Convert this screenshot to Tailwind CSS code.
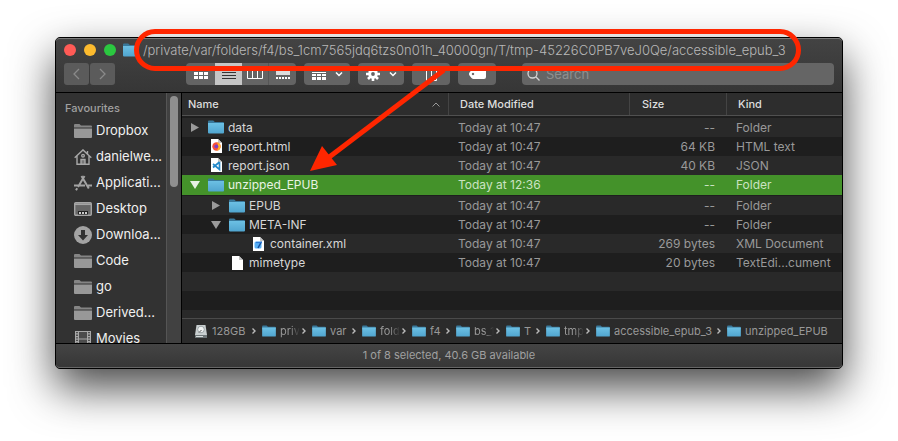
<!DOCTYPE html>
<html lang="en">
<head>
<meta charset="utf-8">
<meta name="viewport" content="width=device-width, initial-scale=1">
<title>accessible_epub_3</title>
<script src="https://cdn.jsdelivr.net/npm/@tailwindcss/browser@4"></script>
</head>
<body class="bg-white font-['Inter','Liberation_Sans',sans-serif]">
<svg class="absolute w-0 h-0" aria-hidden="true">
  <defs>
    <linearGradient id="blue" x1="0" y1="0" x2="0" y2="1"><stop offset="0" stop-color="#6cc0e4"/><stop offset="1" stop-color="#50a5cf"/></linearGradient>
  </defs>
  <symbol id="folder" viewBox="0 0 16 14"><path fill="#39789a" d="M0 1.500Q0 .5 1 .5h4.200l1.600 1.500H15q1 0 1 1V5H0z"/><path fill="url(#blue)" d="M0 3h16v9.500q0 1-1 1H1q-1 0-1-1z"/></symbol>
  <symbol id="sfolder" viewBox="0 0 18 14"><path fill="#858585" d="M0 1Q0 0 1 0h4.500l1.500 1.500H17q1 0 1 1V3.500H0z"/><path fill="#989898" d="M0 4.500h18V13q0 1-1 1H1q-1 0-1-1z"/></symbol>
  <symbol id="page" viewBox="0 0 11 14"><path fill="#fff" d="M0 0h7l4 4v10H0z"/><path fill="#c4c4c4" d="M7 0l4 4H7z"/></symbol>
</svg>
<div class="min-h-screen overflow-hidden px-[55px] pt-[37px]">
  <div class="relative rounded-[5px] border border-black bg-[#323232] shadow-[0_19px_44px_rgba(0,0,0,0.72)]">

    <header class="rounded-t-[4px] border-t border-b border-t-[#7a7a7a] border-b-black bg-linear-to-b from-[#434343] to-[#363636] h-[55px] px-2">
      <div class="flex items-center h-[22px]">
        <div class="flex gap-2 shrink-0">
          <button aria-label="Close" class="size-3 rounded-full bg-[#ff5b56]"></button>
          <button aria-label="Minimise" class="size-3 rounded-full bg-[#fdbb2e]"></button>
          <button aria-label="Zoom" class="size-3 rounded-full bg-[#2bc840]"></button>
        </div>
        <svg class="ml-[7px] w-4 h-[14px] shrink-0"><use href="#folder"/></svg>
        <h1 class="ml-1 text-[13px] leading-4 font-light text-[#b8b8b8] whitespace-nowrap">/private/var/folders/f4/bs_1cm7565jdq6tzs0n01h_40000gn/T/tmp-45226C0PB7veJ0Qe/accessible_epub_3</h1>
      </div>
      <div class="flex items-center mt-[2px] h-[22px]">
        <div class="flex gap-px shrink-0 mr-[71px]">
          <button aria-label="Back" class="flex items-center justify-center w-[25px] h-[22px] rounded-[3px] bg-[#5b5b5b]"><svg class="w-[7px] h-3" viewBox="0 0 7 12" fill="none" stroke="#8a8a8a" stroke-width="1.300"><path d="M6 1L1 6l5 5"/></svg></button>
          <button aria-label="Forward" class="flex items-center justify-center w-[25px] h-[22px] rounded-[3px] bg-[#5b5b5b]"><svg class="w-[7px] h-3" viewBox="0 0 7 12" fill="none" stroke="#8a8a8a" stroke-width="1.300"><path d="M1 1l5 5-5 5"/></svg></button>
        </div>
        <div class="flex shrink-0 mr-2 rounded-[4px] overflow-hidden bg-[#646464]">
          <button aria-label="Icon view" class="flex items-center justify-center w-[29px] h-[22px]"><svg class="w-[14px] h-3" viewBox="0 0 14 12" fill="#fff"><path d="M0 0h4v3H0zM5 0h4v3H5zM10 0h4v3h-4zM0 4h4v3H0zM5 4h4v3H5zM10 4h4v3h-4zM0 8h4v3H0zM5 8h4v3H5zM10 8h4v3h-4z"/></svg></button>
          <button aria-label="List view" class="flex items-center justify-center w-[27px] h-[22px] bg-[#c6c6c6]"><svg class="w-[14px] h-3" viewBox="0 0 14 12" stroke="#333"><path d="M0 1.500h14M0 4.500h14M0 7.500h14M0 10.500h14"/></svg></button>
          <button aria-label="Column view" class="flex items-center justify-center w-[26px] h-[22px]"><svg class="w-4 h-3" viewBox="0 0 16 12" fill="none" stroke="#fff"><path d="M.5 .5h15v10H.5zM5.500 0v11M10.500 0v11"/></svg></button>
          <button aria-label="Gallery view" class="flex items-center justify-center w-7 h-[22px] border-l border-[#555]"><svg class="w-[14px] h-3" viewBox="0 0 14 12" fill="#fff"><path fill="#ddd" d="M0 0h14v7H0z"/><path d="M0 9h2v2H0zM3 9h2v2H3zM6 9h2v2H6zM9 9h2v2H9zM12 9h2v2h-2z"/></svg></button>
        </div>
        <div class="flex gap-2 shrink-0 mr-[26px]">
          <button aria-label="Group" class="flex items-center justify-center gap-[9px] w-[46px] h-[22px] rounded-[4px] bg-[#646464]"><svg class="w-[14px] h-3" viewBox="0 0 14 12" fill="#fff"><path d="M0 0h4v3H0zM5 0h4v3H5zM10 0h4v3h-4zM0 4h14v1H0zM0 6h4v2H0zM5 6h4v2H5zM10 6h4v2h-4zM0 9h4v3H0zM5 9h4v3H5zM10 9h4v3h-4z"/></svg><svg class="w-2 h-[5px]" viewBox="0 0 8 5" fill="none" stroke="#fff" stroke-width="1.500"><path d="M1 .5l3 3 3-3"/></svg></button>
          <button aria-label="Action" class="flex items-center justify-center gap-[9px] w-[46px] h-[22px] rounded-[4px] bg-[#646464]"><svg class="size-[14px]" viewBox="0 0 14 14"><g stroke="#fff" stroke-width="2.600"><path d="M7 0v14M0 7h14M2 2l10 10M12 2L2 12"/></g><circle cx="7" cy="7" r="4.800" fill="#fff"/><circle cx="7" cy="7" r="1.900" fill="#646464"/></svg><svg class="w-2 h-[5px]" viewBox="0 0 8 5" fill="none" stroke="#fff" stroke-width="1.500"><path d="M1 .5l3 3 3-3"/></svg></button>
          <button aria-label="Share" class="flex items-center justify-center w-[38px] h-[22px] rounded-[4px] bg-[#646464]"><svg class="w-[11px] h-4" viewBox="0 0 11 16" fill="none" stroke="#fff"><path d="M3.500 4.500h-3v10h10v-10h-3M5.500 10V1M3 3.500L5.500 1 8 3.500"/></svg></button>
          <button aria-label="Tags" class="flex items-center justify-center w-[38px] h-[22px] rounded-[4px] bg-[#646464]"><svg class="w-[17px] h-[10px]" viewBox="0 0 17 10"><path fill="#fff" fill-rule="evenodd" d="M4.500 0H15q2 0 2 2v6q0 2-2 2H4.500Q3.500 10 2.500 9L.5 6.500Q-.5 5 .5 3.500L2.500 1Q3.500 0 4.500 0zM4 3.800a1.200 1.200 0 1 0 .01 0z"/></svg></button>
        </div>
        <label class="flex flex-1 items-center gap-[6px] h-[22px] pl-[5px] rounded-[4px] bg-[#656565]">
          <svg class="size-[13px] shrink-0" viewBox="0 0 13 13" fill="none" stroke="#d4d4d4" stroke-width="1.300"><circle cx="5.500" cy="5.500" r="4.500"/><path d="M8.800 8.800L12.500 12.500"/></svg>
          <input type="search" aria-label="Search" placeholder="Search" class="flex-1 min-w-0 bg-transparent outline-none text-[13px] leading-4 text-white placeholder:text-[#8f8f8f]">
        </label>
        </div>
    </header>

    <div class="flex h-[250px] overflow-hidden">
      <nav aria-label="Favourites" class="flex w-[126px] shrink-0 border-r border-black">
        <div class="flex-1 min-w-0 pl-[9px]">
          <h2 class="pt-2 pb-[3px] text-[11px] leading-[14px] font-medium text-[#a0a0a0]">Favourites</h2>
          <ul class="pl-[9px] text-[13px] text-[#f0f0f0] [&_a]:flex [&_a]:items-center [&_a]:gap-1 [&_a]:h-[26px] [&_svg]:w-[18px] [&_svg]:shrink-0">
            <li><a href="#"><svg class="h-[14px]"><use href="#sfolder"/></svg>Dropbox</a></li>
            <li><a href="#"><svg class="h-4" viewBox="0 0 18 16" fill="none" stroke="#a8a8a8" stroke-width="1.400"><path d="M.7 8.700L9 .9l8.300 7.800M3 7v8.300h12V7M13.500 5V2"/><path fill="#777" d="M7 15.300V10.500h4v4.800z"/><circle cx="9" cy="6.700" r="1.300"/></svg>danielwe...</a></li>
            <li><a href="#"><svg class="h-4" viewBox="0 0 18 16" fill="none" stroke="#a3a3a3" stroke-width="2"><path d="M10.500 1L4 12M7.500 1l7.300 12.500M0 10.500h11M14 10.500h4M3.200 13.200L2 15.200"/></svg>Applicati...</a></li>
            <li><a href="#"><svg class="h-[14px]" viewBox="0 0 18 14"><rect x=".7" y=".7" width="16.600" height="12.600" rx="1" fill="#666" stroke="#a5a5a5" stroke-width="1.400"/><path stroke="#a5a5a5" stroke-width="1.500" d="M1 2.300h16"/><path fill="#222" d="M4 9h10v3.500H4z"/><path fill="#ccc" d="M5 10h2v2H5zM8 10h2v2H8zM11 10h2v2h-2z"/></svg>Desktop</a></li>
            <li><a href="#"><svg class="h-[18px]" viewBox="0 0 18 18"><circle cx="9" cy="9" r="9" fill="#a3a3a3"/><path fill="#323232" d="M7 4h4v5h3l-5 5.500L4 9h3z"/></svg>Downloa...</a></li>
            <li><a href="#"><svg class="h-[14px]"><use href="#sfolder"/></svg>Code</a></li>
            <li><a href="#"><svg class="h-[14px]"><use href="#sfolder"/></svg>go</a></li>
            <li><a href="#"><svg class="h-[14px]"><use href="#sfolder"/></svg>Derived...</a></li>
            <li><a href="#"><svg class="h-4" viewBox="0 0 18 16"><path fill="#a8a8a8" d="M1 0h16v16H1z"/><path fill="#4c4c4c" d="M5 1h8v6.500H5zM5 8.500h8V15H5z"/><path stroke="#323232" stroke-width="1.500" stroke-dasharray="1.300 1.300" d="M3 1v15M15 1v15"/></svg>Movies</a></li>
          </ul>
        </div>
        <div class="w-[15px] border-l border-[#555] bg-[#414141] pt-[3px] pl-[3px]"><div class="w-2 h-[91px] rounded-full bg-[#8f8f8f]"></div></div>
      </nav>

      <main class="flex flex-1 min-w-0 flex-col bg-[#1e1e1e]">
        <table class="w-full table-fixed border-collapse text-left text-xs leading-[19px] whitespace-nowrap text-[#999]">
          <colgroup><col><col class="w-[181px]"><col class="w-[97px]"><col class="w-[115px]"></colgroup>
          <thead class="bg-[#2d2d2d] text-[11px] leading-[22px] text-[#dedede] [&_th]:p-0 [&_th]:font-medium">
            <tr class="border-b border-[#505050]">
              <th scope="col" aria-sort="ascending"><div class="flex items-center justify-between pl-[6px] pr-2 border-r border-[#444]">Name<svg class="w-2 h-[5px]" viewBox="0 0 8 5" fill="none" stroke="#999"><path d="M.5 4.500L4 1l3.500 3.500"/></svg></div></th>
              <th scope="col"><div class="pl-[11px] border-r border-[#444]">Date Modified</div></th>
              <th scope="col"><div class="pl-3 border-r border-[#444]">Size</div></th>
              <th scope="col"><div class="pl-[11px]">Kind</div></th>
            </tr>
            <tr class="bg-[#1e1e1e]"><td colspan="4" class="h-[2px] p-0"></td></tr>
          </thead>
          <tbody class="[&_td]:p-0 [&_td:nth-child(2)]:pl-[9px] [&_td:nth-child(3)]:pr-3 [&_td:nth-child(3)]:text-right [&_td:nth-child(4)]:pl-[9px] [&_td:first-child]:text-[#d6d6d6]">
            <tr class="bg-[#292929]"><td><div class="flex items-center pl-[9px]"><svg class="w-2 h-[9px] mr-[9px]" viewBox="0 0 8 9"><path fill="#9a9a9a" d="M0 0l8 4.500L0 9z"/></svg><svg class="w-4 h-[14px] mr-1"><use href="#folder"/></svg>data</div></td><td>Today at 10:47</td><td>--</td><td>Folder</td></tr>
            <tr><td><div class="flex items-center pl-[29px]"><svg class="w-[11px] h-[14px] mr-[6px]" viewBox="0 0 11 14"><use href="#page"/><circle cx="5.500" cy="7.500" r="4.200" fill="#f6503c"/><path fill="#fdb92b" d="M6 3.200q4.500 1.500 3.500 5.500-1.500 3-4.500 3 4-2 1-8.500z"/><circle cx="5.300" cy="7.300" r="1.900" fill="#7a3fc4"/></svg>report.html</div></td><td>Today at 10:47</td><td>64 KB</td><td>HTML text</td></tr>
            <tr class="bg-[#292929]"><td><div class="flex items-center pl-[29px]"><svg class="w-[11px] h-[14px] mr-[6px]" viewBox="0 0 11 14"><use href="#page"/><path fill="none" stroke="#2389ca" stroke-width="1.700" d="M8.500 4v7.500L2 6M8.500 4L2 9.500"/></svg>report.json</div></td><td>Today at 10:47</td><td>40 KB</td><td>JSON</td></tr>
            <tr aria-selected="true" class="h-[21px] border-b border-[#1e1e1e] bg-[#44922a] text-[#cbe3c2]"><td><div class="flex items-center pl-2 text-[#e8f3e4]"><svg class="w-[10px] h-2 mr-2" viewBox="0 0 10 8"><path fill="#e6f2e2" d="M0 0h10L5 8z"/></svg><svg class="w-4 h-[14px] mr-1"><use href="#folder"/></svg>unzipped_EPUB</div></td><td>Today at 12:36</td><td>--</td><td>Folder</td></tr>
            <tr class="bg-[#292929]"><td><div class="flex items-center pl-[30px]"><svg class="w-2 h-[9px] mr-[9px]" viewBox="0 0 8 9"><path fill="#9a9a9a" d="M0 0l8 4.500L0 9z"/></svg><svg class="w-4 h-[14px] mr-1"><use href="#folder"/></svg>EPUB</div></td><td>Today at 10:47</td><td>--</td><td>Folder</td></tr>
            <tr><td><div class="flex items-center pl-[29px]"><svg class="w-[10px] h-2 mr-2" viewBox="0 0 10 8"><path fill="#9a9a9a" d="M0 0h10L5 8z"/></svg><svg class="w-4 h-[14px] mr-1"><use href="#folder"/></svg>META-INF</div></td><td>Today at 10:47</td><td>--</td><td>Folder</td></tr>
            <tr class="bg-[#292929]"><td><div class="flex items-center pl-[71px]"><svg class="w-[11px] h-[14px] mr-[6px]" viewBox="0 0 11 14"><use href="#page"/><rect x="1.500" y="4.500" width="7" height="7" rx="1.500" fill="#55aef5"/><path stroke="#174f9c" stroke-width="1.500" d="M8.500 4.500L5 11"/><path stroke="#2b78d6" stroke-width="1.200" d="M3 5.500h6"/></svg>container.xml</div></td><td>Today at 10:47</td><td>269 bytes</td><td>XML Document</td></tr>
            <tr><td><div class="flex items-center pl-[50px]"><svg class="w-[11px] h-[14px] mr-[6px]"><use href="#page"/></svg>mimetype</div></td><td>Today at 10:47</td><td>20 bytes</td><td>TextEdi...cument</td></tr>
          </tbody>
        </table>
        <div class="h-[19px] shrink-0 bg-[#292929]"></div>
        <div class="h-[19px] shrink-0"></div>
        <div class="flex-1 bg-[#292929]"></div>
        <nav aria-label="Path" class="h-[25px] shrink-0 border-t border-[#4a4a4a] bg-[#2b2b2b] pl-[13px]">
          <ol class="flex h-6 text-[11px] leading-[14px] whitespace-nowrap text-[#989898] [&>li]:flex [&>li]:items-center [&>li]:shrink-0 [&_span]:overflow-hidden [&_span]:flex-1 [&_.chev]:w-1 [&_.chev]:h-[6px] [&_.chev]:mr-[6px] [&_.chev]:ml-[2px]">
            <li class="w-[67px]"><svg class="w-3 h-[13px] mr-[5px]" viewBox="0 0 12 13"><path fill="#c9cfd0" d="M1.500 0h9L12 10v3H0v-3z"/><path fill="#6e7678" d="M0 10h12v3H0z"/><circle cx="6" cy="4.500" r="3.300" fill="#f1f4f4" stroke="#7f8a8c" stroke-width=".7"/><path stroke="#555" d="M4 7.500L6.500 5"/><path fill="#d8dede" d="M1 11h7v1H1z"/></svg><span>128GB</span><svg class="chev" viewBox="0 0 4 6" fill="none" stroke="#bbb" stroke-width="1.400"><path d="M.5 .5L3 3 .5 5.500"/></svg></li>
            <li class="w-[50px]"><svg class="w-[14px] h-3 mr-1"><use href="#folder"/></svg><span class="mask-r-from-50%">priv</span><svg class="chev" viewBox="0 0 4 6" fill="none" stroke="#bbb" stroke-width="1.400"><path d="M.5 .5L3 3 .5 5.500"/></svg></li>
            <li class="w-[50px]"><svg class="w-[14px] h-3 mr-1"><use href="#folder"/></svg><span>var</span><svg class="chev" viewBox="0 0 4 6" fill="none" stroke="#bbb" stroke-width="1.400"><path d="M.5 .5L3 3 .5 5.500"/></svg></li>
            <li class="w-[50px]"><svg class="w-[14px] h-3 mr-1"><use href="#folder"/></svg><span class="mask-r-from-50%">fold</span><svg class="chev" viewBox="0 0 4 6" fill="none" stroke="#bbb" stroke-width="1.400"><path d="M.5 .5L3 3 .5 5.500"/></svg></li>
            <li class="w-11"><svg class="w-[14px] h-3 mr-1"><use href="#folder"/></svg><span>f4</span><svg class="chev" viewBox="0 0 4 6" fill="none" stroke="#bbb" stroke-width="1.400"><path d="M.5 .5L3 3 .5 5.500"/></svg></li>
            <li class="w-[50px]"><svg class="w-[14px] h-3 mr-1"><use href="#folder"/></svg><span class="mask-r-from-50%">bs_1</span><svg class="chev" viewBox="0 0 4 6" fill="none" stroke="#bbb" stroke-width="1.400"><path d="M.5 .5L3 3 .5 5.500"/></svg></li>
            <li class="w-10"><svg class="w-[14px] h-3 mr-1"><use href="#folder"/></svg><span>T</span><svg class="chev" viewBox="0 0 4 6" fill="none" stroke="#bbb" stroke-width="1.400"><path d="M.5 .5L3 3 .5 5.500"/></svg></li>
            <li class="w-[50px]"><svg class="w-[14px] h-3 mr-1"><use href="#folder"/></svg><span class="mask-r-from-50%">tmp</span><svg class="chev" viewBox="0 0 4 6" fill="none" stroke="#bbb" stroke-width="1.400"><path d="M.5 .5L3 3 .5 5.500"/></svg></li>
            <li class="w-[131px]"><svg class="w-[14px] h-3 mr-1"><use href="#folder"/></svg><span>accessible_epub_3</span><svg class="chev" viewBox="0 0 4 6" fill="none" stroke="#bbb" stroke-width="1.400"><path d="M.5 .5L3 3 .5 5.500"/></svg></li>
            <li><svg class="w-[14px] h-3 mr-1"><use href="#folder"/></svg><span>unzipped_EPUB</span></li>
          </ol>
        </nav>
      </main>
    </div>

    <footer class="h-[25px] rounded-b-[4px] border-t border-b border-t-black border-b-[#666] bg-linear-to-b from-[#444] to-[#373737] text-center text-[11px] leading-[23px] text-[#a0a0a0]">1 of 8 selected, 40.6 GB available</footer>

    <div class="absolute left-[78px] right-[41px] -top-[9px] h-[42px] rounded-full border-5 border-[#ff2600] pointer-events-none"></div>
    <svg class="absolute left-[254px] top-[30px] w-[140px] h-[105px] pointer-events-none" viewBox="0 0 140 105" aria-hidden="true"><path stroke="#ff2600" stroke-width="5" d="M134 2L18 90"/><path fill="#ff2600" d="M0 103l12-25 15 19z"/></svg>
  </div>
</div>
</body>
</html>
